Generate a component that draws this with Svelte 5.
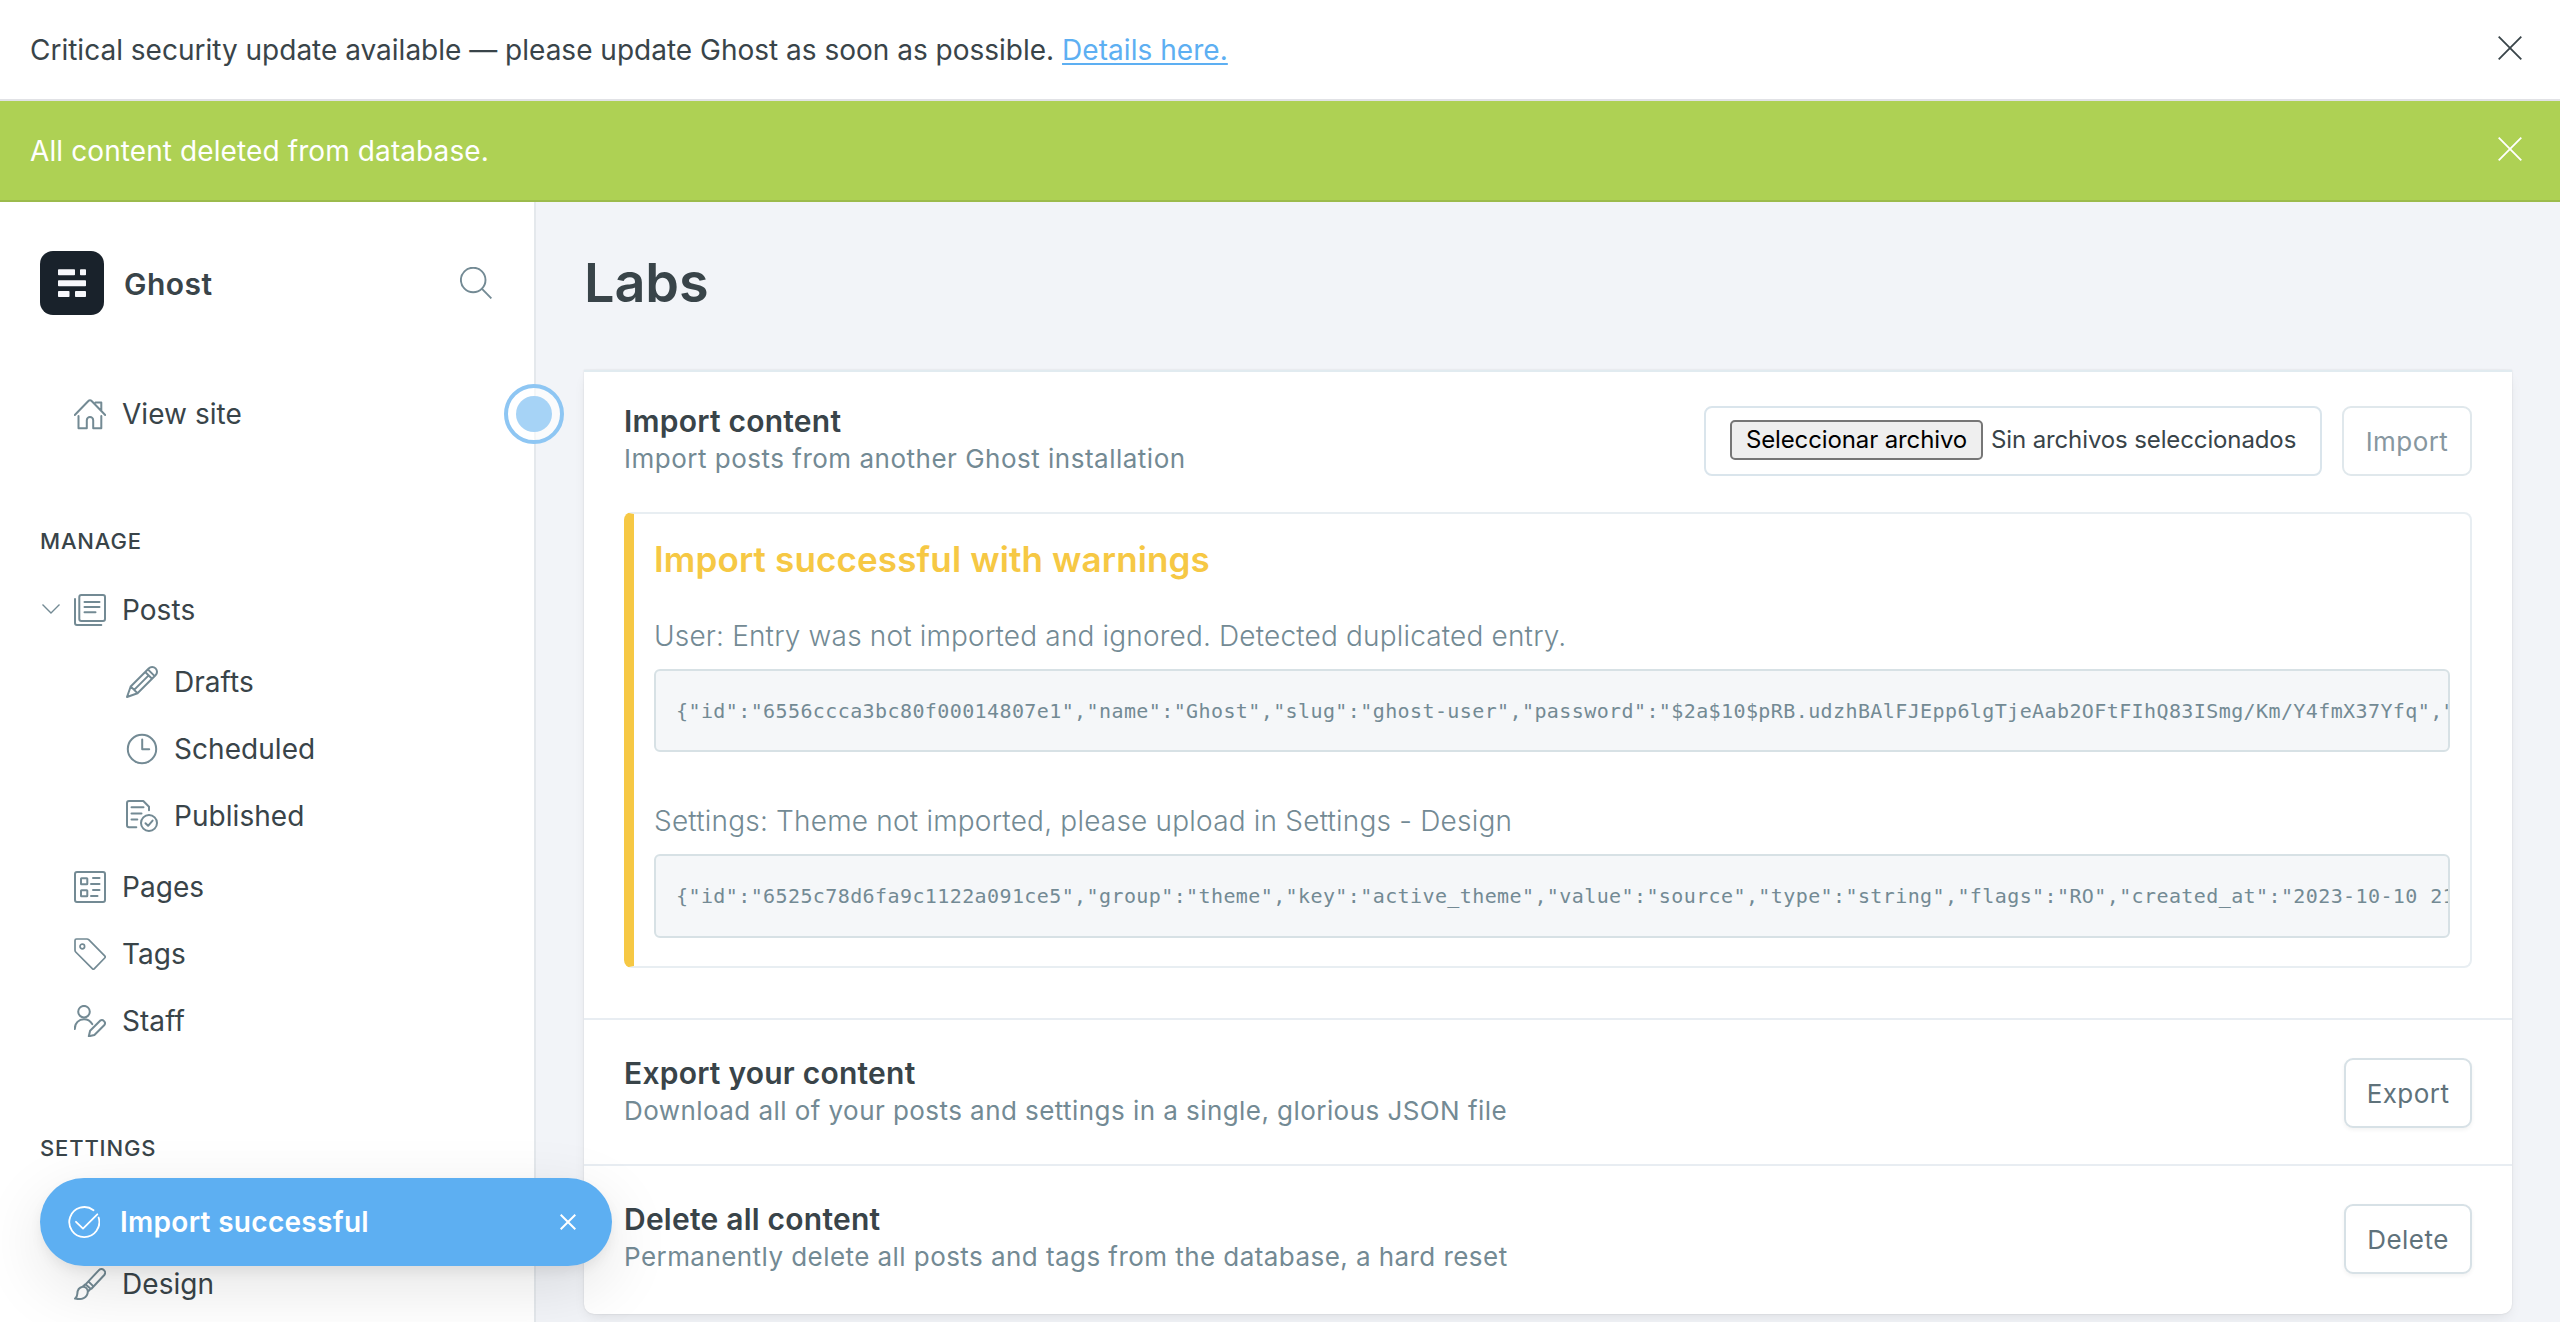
<script>
  const userJson = '{"id":"6556ccca3bc80f00014807e1","name":"Ghost","slug":"ghost-user","password":"$2a$10$pRB.udzhBAlFJEpp6lgTjeAab2OFtFIhQ83ISmg/Km/Y4fmX37Yfq","';
  const themeJson = '{"id":"6525c78d6fa9c1122a091ce5","group":"theme","key":"active_theme","value":"source","type":"string","flags":"RO","created_at":"2023-10-10 21';
</script>

<div class="app">
  <div class="alert">
    <span class="alert-text">Critical security update available — please update Ghost as soon as possible. <a class="link" href="#details">Details here.</a></span>
    <svg class="close" viewBox="0 0 24 24"><path d="M.7.7l22.6 22.6M23.3.7L.7 23.3" /></svg>
  </div>
  <div class="alert green">
    <span class="alert-text">All content deleted from database.</span>
    <svg class="close" viewBox="0 0 24 24"><path d="M.7.7l22.6 22.6M23.3.7L.7 23.3" /></svg>
  </div>

  <div class="body">
    <nav class="sidebar">
      <header class="brand">
        <svg class="logo" viewBox="0 0 64 64">
          <rect width="64" height="64" rx="13" fill="#19222b" />
          <g fill="#f7f8fc">
            <rect x="18" y="18.3" width="17" height="6" rx=".8" /><rect x="40" y="18.3" width="6" height="6" rx=".8" />
            <rect x="18" y="29.2" width="28" height="6" rx=".8" />
            <rect x="18" y="40" width="11.5" height="6" rx=".8" /><rect x="35" y="40" width="11" height="6" rx=".8" />
          </g>
        </svg>
        <span class="brand-name">Ghost</span>
        <svg class="search icon" viewBox="0 0 32 32"><circle cx="13.2" cy="13" r="12.3" /><path d="M22 21.8l9.4 9.6" /></svg>
      </header>

      <div class="item view">
        <svg class="icon" viewBox="0 0 32 32"><path d="M.8 17L14.6 2.8a1.9 1.9 0 0 1 2.8 0L31.2 17M21.5 4.6h5.8v8M4.5 18v12.3h8.3v-8a3.2 3.2 0 0 1 6.4 0v8h8.1V18" /></svg>
        <span>View site</span>
        <span class="beacon"><span class="beacon-dot"></span></span>
      </div>

      <h2 class="group">MANAGE</h2>
      <div class="item first">
        <svg class="chevron" viewBox="0 0 18 10"><path d="M.5.5L9 9l8.500-8.500" /></svg>
        <svg class="icon" viewBox="0 0 32 32"><rect x="5.300" y="1" width="25.700" height="26" rx="2" /><path d="M10.500 8h15M10.500 13h15M10.500 18.300h11M1 5v24a2 2 0 0 0 2 2h24.300" /></svg>
        <span>Posts</span>
      </div>
      <div class="submenu">
        <div class="item sub">
          <svg class="icon" viewBox="0 0 24 24"><path class="s24" d="M22.190 1.810a3.640 3.640 0 0 0-5.170.035l-13.500 13.500L.750 23.250l7.900-2.771 13.500-13.500a3.637 3.637 0 0 0 .040-5.169zM16.400 2.500l5.100 5.100M14.400 4.500l5.100 5.100M17 7L6.100 17.900M3.520 15.345l2.580 2.555 2.550 2.579" /></svg>
          <span>Drafts</span>
        </div>
        <div class="item sub">
          <svg class="icon" viewBox="0 0 32 32"><circle cx="16" cy="16" r="14.200" /><path d="M16.200 6.500v9.800h7" /></svg>
          <span>Scheduled</span>
        </div>
        <div class="item sub">
          <svg class="icon" viewBox="0 0 32 32"><path d="M10.300 27.300H3a2 2 0 0 1-2-2V3a2 2 0 0 1 2-2h14.300L23 6.700v3.600M5.500 7.300h12M5.500 13.400h10M5.500 19.400h5.800" /><circle cx="23" cy="23" r="8" /><path d="M19.500 23.300l2.600 2.500 4.500-5.200" /></svg>
          <span>Published</span>
        </div>
      </div>
      <div class="item">
        <svg class="icon" viewBox="0 0 32 32"><rect x="1" y="1" width="30" height="30" rx="2" /><rect x="7" y="7.200" width="6.300" height="6" rx=".5" /><rect x="7" y="19.200" width="6.300" height="6" rx=".5" /><path d="M19 7h6.500M17 13h8.500M19 19h6.500M17 25h6.500" /></svg>
        <span>Pages</span>
      </div>
      <div class="item">
        <svg class="icon" viewBox="0 0 32 32"><path class="fine" d="M2.500 1H13a2.500 2.500 0 0 1 1.700.7L30.700 17.900a1.500 1.500 0 0 1 0 2.100L20.400 30.700a1.500 1.500 0 0 1-2.100 0L1.700 14A2.500 2.500 0 0 1 1 12.300V2.500A1.500 1.500 0 0 1 2.500 1z" /><circle class="fine" cx="8.300" cy="8.500" r="2.300" /></svg>
        <span>Tags</span>
      </div>
      <div class="item">
        <svg class="icon" viewBox="0 0 32 32"><circle cx="10" cy="6.700" r="5.800" /><path d="M.8 24c0-6 4-9.700 9.200-9.700 3.300 0 6.400 1.800 8.200 4.800M14.800 31.300l1.300-5.600 10-10a3.100 3.100 0 0 1 4.300 4.300l-10 10z" /></svg>
        <span>Staff</span>
      </div>

      <h2 class="group">SETTINGS</h2>
      <div class="item design">
        <svg class="icon" viewBox="0 0 32 32"><path d="M11.600 16.400L24.700 2.400a3.600 3.600 0 0 1 5.600 4.600L17.400 20.700M14.600 13.600l4.800 4.800M8.600 18.800l2.800-2.600 5.200 4.600-2.800 3M8.600 18.800C4.600 19.600 3.400 22.300 3.300 25.900c0 1.800-.8 3.200-2.300 4.700 6.300 1.400 12.600-.6 12.800-6.800.1-3-2.200-5.200-5.200-5z" /></svg>
        <span>Design</span>
      </div>
    </nav>

    <main class="main">
      <h1 class="title">Labs</h1>
      <div class="card">
        <section class="section import">
          <div class="row">
            <div>
              <h3 class="name">Import content</h3>
              <p class="desc">Import posts from another Ghost installation</p>
            </div>
            <div class="controls">
              <div class="file">
                <span class="file-btn">Seleccionar archivo</span>
                <span class="file-label">Sin archivos seleccionados</span>
              </div>
              <button class="btn disabled">Import</button>
            </div>
          </div>
          <div class="warning">
            <h4 class="warning-title">Import successful with warnings</h4>
            <p class="warning-text">User: Entry was not imported and ignored. Detected duplicated entry.</p>
            <pre class="code">{userJson}</pre>
            <p class="warning-text second">Settings: Theme not imported, please upload in Settings - Design</p>
            <pre class="code tall">{themeJson}</pre>
          </div>
        </section>
        <section class="section">
          <div class="row">
            <div>
              <h3 class="name">Export your content</h3>
              <p class="desc">Download all of your posts and settings in a single, glorious JSON file</p>
            </div>
            <button class="btn">Export</button>
          </div>
        </section>
        <section class="section">
          <div class="row">
            <div>
              <h3 class="name">Delete all content</h3>
              <p class="desc">Permanently delete all posts and tags from the database, a hard reset</p>
            </div>
            <button class="btn">Delete</button>
          </div>
        </section>
      </div>
    </main>
  </div>

  <div class="toast">
    <svg class="toast-check" viewBox="0 0 32 32"><path d="M25.500 4.200A15 15 0 1 0 30.600 11.500M8 15.800l7 6.800L29.300 8.300" /></svg>
    <span>Import successful</span>
    <svg class="toast-close" viewBox="0 0 16 16"><path d="M.7.7l14.600 14.600M15.300.7L.7 15.300" /></svg>
  </div>
</div>

<style>
  :global(body) { margin: 0; overflow: hidden; }
  .app {
    position: relative;
    display: flex;
    flex-direction: column;
    width: 2560px;
    height: 1322px;
    overflow: hidden;
    background: #fff;
    color: #394449;
    font-family: Inter, "Liberation Sans", sans-serif;
    font-size: 28px;
    letter-spacing: 0.05px;
  }
  h1, h2, h3, h4, p, pre { margin: 0; }
  svg { display: block; flex: none; fill: none; }

  .alert {
    display: flex;
    flex: none;
    align-items: center;
    justify-content: space-between;
    box-sizing: border-box;
    height: 101px;
    padding: 0 36px 0 30px;
    border-bottom: 2px solid #e1e2e6;
    letter-spacing: 0;
  }
  .alert.green { background: #aed154; border-color: #9cbb4c; color: #fff; letter-spacing: 0.1px; }
  .link { color: #5daff2; text-decoration: underline; text-decoration-thickness: 2px; text-underline-offset: 3px; letter-spacing: 0.05px; }
  .close { width: 24px; height: 24px; margin: 0 2px 3px 0; stroke: #394449; stroke-width: 1.8; }
  .green .close { stroke: #fff; }

  .body { display: flex; flex: 1; min-height: 0; }
  .sidebar {
    box-sizing: border-box;
    flex: none;
    width: 536px;
    padding-top: 49px;
    border-right: 2px solid #e4e8ec;
    background: #fff;
  }
  .brand { display: flex; align-items: center; padding: 0 42px 0 40px; }
  .logo { width: 64px; height: 64px; }
  .brand-name { margin: 2px auto 0 20px; font-size: 30px; font-weight: 600; letter-spacing: 0.45px; }
  .icon { width: 32px; height: 32px; stroke: #738a94; stroke-width: 2; stroke-linecap: round; stroke-linejoin: round; }
  .s24 { stroke-width: 1.5; }
  .fine { stroke-width: 1.7; }
  .search { stroke-linecap: butt; stroke-width: 1.9; }
  .item { position: relative; display: flex; align-items: center; gap: 16px; height: 67px; padding-left: 74px; }
  .view { margin-top: 65px; }
  .group { height: 30px; margin-top: 79px; padding-left: 40px; font-size: 22px; font-weight: 500; line-height: 30px; letter-spacing: 0.85px; }
  .first { margin-top: 20px; }
  .chevron { position: absolute; top: 28px; left: 42px; width: 18px; height: 10px; stroke: #738a94; stroke-width: 1.4; }
  .submenu { padding: 5px 0 4px; }
  .sub { padding-left: 126px; }
  .design { margin-top: 87px; }
  .beacon {
    position: absolute;
    top: 4px;
    right: -30px;
    z-index: 2;
    display: grid;
    place-items: center;
    box-sizing: border-box;
    width: 60px;
    height: 60px;
    border: 4px solid #8ec6f3;
    border-radius: 50%;
    background: rgba(255, 255, 255, 0.6);
  }
  .beacon-dot { width: 36px; height: 36px; border-radius: 50%; background: #a6d3f6; }

  .main { flex: 1; min-width: 0; padding: 49px 48px 0; background: #f2f4f8; }
  .title { height: 64px; margin-bottom: 55px; font-size: 54px; font-weight: 600; line-height: 64px; letter-spacing: -0.1px; }
  .card {
    border-top: 2px solid #e1ebf0;
    border-radius: 0 0 10px 10px;
    background: #fff;
    box-shadow: 0 0 2px rgba(0, 0, 0, 0.12), 0 6px 14px -4px rgba(0, 0, 0, 0.1);
  }
  .section { padding: 34px 40px; border-bottom: 2px solid #e8edf2; }
  .section:last-child { padding-bottom: 38px; border-bottom: 0; }
  .import { padding: 30px 40px 50px; }
  .row { display: flex; justify-content: space-between; }
  .name { font-size: 30px; font-weight: 600; line-height: 38px; letter-spacing: 0.23px; }
  .desc { color: #738a94; font-size: 26px; line-height: 38px; letter-spacing: 0.44px; }
  .import .desc { letter-spacing: 0.5px; }
  .controls { display: flex; gap: 20px; }
  .file {
    display: flex;
    align-items: flex-start;
    gap: 8px;
    box-sizing: border-box;
    width: 618px;
    height: 70px;
    margin-top: 4px;
    padding: 12px 0 0 24px;
    border: 2px solid #dae5ec;
    border-radius: 8px;
    font-size: 24px;
    letter-spacing: -0.12px;
    line-height: 36px;
    white-space: nowrap;
  }
  .file-btn { box-sizing: border-box; width: 253px; height: 40px; border: 2px solid #767676; border-radius: 5px; background: #efefef; color: #000; text-align: center; }
  .file-label { margin-top: 2px; }
  .btn {
    box-sizing: border-box;
    width: 128px;
    height: 70px;
    margin: 4px 0 0;
    padding: 0;
    border: 2px solid #d7e1e6;
    border-radius: 9px;
    background: #fff;
    box-shadow: 0 2px 4px rgba(0, 0, 0, 0.05);
    color: #5f727b;
    font: 400 26px Inter, "Liberation Sans", sans-serif;
    letter-spacing: 0.45px;
  }
  .btn.disabled { width: 130px; border-color: #e0e8ec; box-shadow: none; color: #8797a0; }

  .warning { margin-top: 34px; padding: 23px 20px 28px; border: 2px solid #e8eef2; border-left: 10px solid #f6c844; border-radius: 8px; }
  .warning-title { color: #f6c844; font-size: 35px; font-weight: 600; line-height: 44px; letter-spacing: 0.14px; }
  .warning-text { margin: 35px 0 13px; color: #738a94; font-weight: 300; line-height: 40px; letter-spacing: 0.17px; }
  .second { margin-top: 49px; letter-spacing: 0.2px; }
  .code {
    box-sizing: border-box;
    height: 83px;
    padding: 0 0 0 20px;
    overflow: hidden;
    border: 2px solid #d7e1e5;
    border-radius: 6px;
    background: #f5f7f9;
    color: #738a94;
    font: 20px "DejaVu Sans Mono", monospace;
    line-height: 80px;
    letter-spacing: 0.4px;
  }
  .tall { height: 84px; }

  .toast {
    position: absolute;
    top: 1178px;
    left: 40px;
    z-index: 5;
    display: flex;
    align-items: center;
    box-sizing: border-box;
    width: 572px;
    height: 88px;
    padding: 0 36px 0 28px;
    border-radius: 44px;
    background: #5daff2;
    box-shadow: 0 6px 14px -2px rgba(0, 0, 0, 0.08), 0 20px 66px rgba(0, 0, 0, 0.11);
    color: #fff;
    font-weight: 600;
    letter-spacing: 0.3px;
  }
  .toast span { margin: 0 auto 0 20px; }
  .toast-check { width: 32px; height: 32px; stroke: #fff; stroke-width: 1.8; stroke-linecap: round; stroke-linejoin: round; }
  .toast-close { width: 16px; height: 16px; stroke: #fff; stroke-width: 2; }
</style>
